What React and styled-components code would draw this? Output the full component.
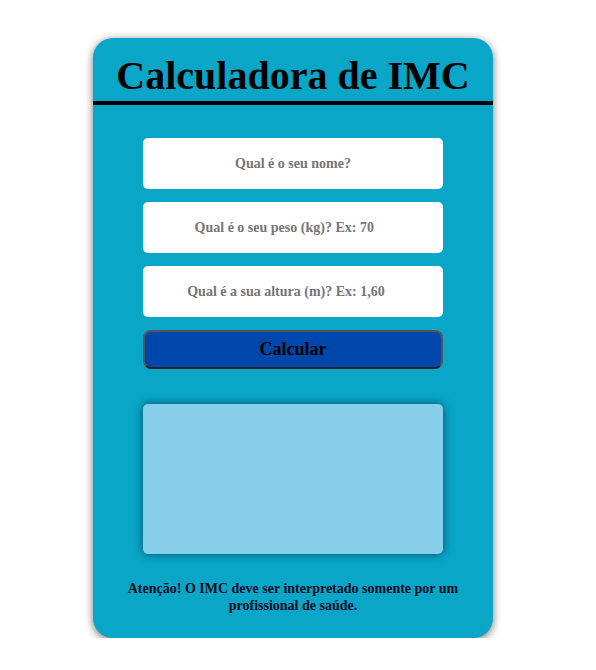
import React from "react";
import styled, { createGlobalStyle } from "styled-components";

const Global = createGlobalStyle`
  body { margin: 8px; background: #fff; font-family: "Liberation Serif", "Times New Roman", serif; }
`;

const Page = styled.div`
  display: flex;
  justify-content: center;
  padding: 30px 10px 0 0;
`;

const Card = styled.div`
  width: 400px;
  height: 600px;
  box-sizing: border-box;
  background: #09a6c8;
  border-radius: 20px;
  box-shadow: 0 2px 8px rgba(0, 0, 0, 0.55);
  display: flex;
  flex-direction: column;
  align-items: center;
`;

const Header = styled.h1`
  align-self: stretch;
  margin: 0;
  padding: 14px 0 2px;
  border-bottom: 4px solid #000;
  text-align: center;
  font-size: 40px;
  font-weight: bold;
  color: #000;
  line-height: normal;
`;

const Form = styled.div`
  display: flex;
  flex-direction: column;
  gap: 13px;
  margin-top: 33px;
  width: 300px;
`;

const Input = styled.input`
  height: 51px;
  box-sizing: border-box;
  border: none;
  border-radius: 5px;
  background: #fff;
  text-align: center;
  font-family: "Liberation Serif", "Times New Roman", serif;
  font-weight: bold;
  font-size: 14px;
  outline: none;
  white-space: pre;
  &::placeholder { color: #757575; white-space: pre; }
`;

const Button = styled.button`
  height: 39px;
  border: 2px solid #555;
  border-bottom-color: #222;
  border-radius: 8px;
  background: #0047ab;
  color: #000;
  font-family: "Liberation Serif", "Times New Roman", serif;
  font-weight: bold;
  font-size: 18px;
`;

const Result = styled.div`
  margin-top: 35px;
  width: 300px;
  height: 150px;
  background: #87ceeb;
  border-radius: 5px;
  box-shadow: 0 0 10px rgba(0, 40, 60, 0.7);
`;

const Note = styled.p`
  margin: 26px 0 0;
  width: 360px;
  text-align: center;
  font-size: 14px;
  font-weight: bold;
  line-height: 17px;
  color: #0a0a1e;
`;

export default function App() {
  return (
    <>
      <Global />
      <Page>
        <Card>
          <Header>Calculadora de IMC</Header>
          <Form>
            <Input placeholder="Qual é o seu nome?" />
            <Input placeholder={"Qual é o seu peso (kg)? Ex: 70\u00a0\u00a0\u00a0\u00a0\u00a0"} />
            <Input placeholder={"Qual é a sua altura (m)? Ex: 1,60\u00a0\u00a0\u00a0\u00a0"} />
            <Button>Calcular</Button>
          </Form>
          <Result />
          <Note>Atenção! O IMC deve ser interpretado somente por um profissional de saúde.</Note>
        </Card>
      </Page>
    </>
  );
}
